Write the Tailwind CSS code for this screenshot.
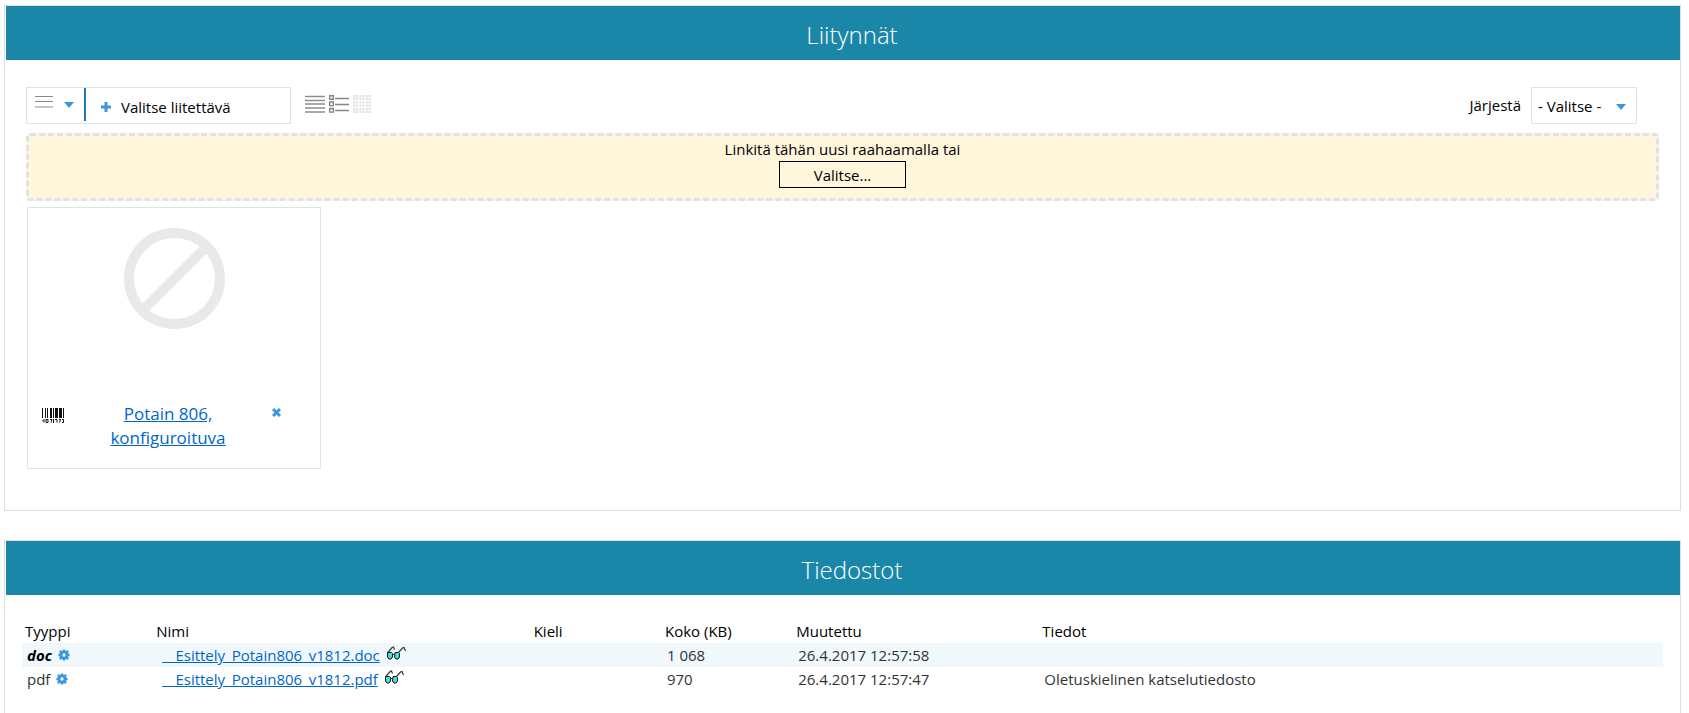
<!DOCTYPE html>
<html lang="fi">
<head>
  <meta charset="utf-8">
  <meta name="viewport" content="width=device-width, initial-scale=1">
  <title>Liitynnät</title>
  <script src="https://cdn.jsdelivr.net/npm/@tailwindcss/browser@4"></script>
</head>
<body class="bg-white text-black text-[15px] leading-6 font-['Segoe_UI','Open_Sans',sans-serif]">
  <!-- shared icons -->
  <svg class="hidden">
    <symbol id="gear" viewBox="0 0 12 12">
      <path fill="none" stroke="#3b97dd" stroke-width="2.4" d="M6 .4v11.200M.4 6h11.200M1.800 1.800l8.400 8.400M10.200 1.800l-8.400 8.400"/>
      <circle cx="6" cy="6" r="3.2" fill="none" stroke="#3b97dd" stroke-width="2.6"/>
      <circle cx="6" cy="6" r="1.7" fill="#f0f8fc"/>
    </symbol>
    <symbol id="glasses" viewBox="0 0 20 14">
      <path fill="#40e0e0" stroke="#111" stroke-width="1" d="M1.500 6.500h4l1 1v3.500l-1.500 2H3l-1.500-2zM9 6.500h3.500l1 1v3.500l-1.500 2h-2L8.500 11z"/>
      <path fill="none" stroke="#333" stroke-width="1.200" d="M1.500 7L6 1.500l1.500-.5 1 2.500M6.500 8.500h2M12.500 6.500L16.500 2l1.500-.5 1.500 3.500"/>
    </symbol>
    <symbol id="caret" viewBox="0 0 10 6">
      <path fill="#3b97dd" d="M0 0h10L5 6z"/>
    </symbol>
  </svg>

  <main class="flex flex-col gap-[29px] pt-[5px] pl-1 pr-2">
    <section class="border border-[#dedede] pb-[41px]">
      <h2 class="ml-px h-[54px] pl-[18px] bg-[#1b87a8] text-white text-2xl leading-[58px] font-light text-center">Liitynnät</h2>
      <div class="pt-[27px] pl-[21px] pr-[21px]">
        <div class="flex items-center mb-[9px]">
          <div class="flex w-[265px] h-[37px] border border-[#dde2ec]">
            <button type="button" aria-label="Toiminnot" class="flex items-center gap-[11px] w-[59px] h-[33px] pl-2 border-r-2 border-[#1f78b4]">
              <svg class="w-[18px] h-3 mb-[6px]" viewBox="0 0 18 12" fill="none" stroke="#8a8a8a"><path d="M0 .5h18M0 5.500h18M0 11h18"/></svg>
              <svg class="w-[10px] h-[6px]"><use href="#caret"/></svg>
            </button>
            <button type="button" class="flex items-center gap-[10px] grow pl-[15px] pt-[2px]">
              <svg class="w-[10px] h-[10px]" viewBox="0 0 10 10" fill="none" stroke="#3b97dd" stroke-width="3"><path d="M5 0v10M0 5h10"/></svg>
              <span>Valitse liitettävä</span>
            </button>
          </div>
          <div class="flex gap-1 ml-[14px] mb-1">
            <button type="button" aria-label="Luettelo">
              <svg class="w-5 h-[18px]" viewBox="0 0 20 18" fill="none" stroke="#8e8e8e" stroke-width="1.500"><path d="M0 1.500h20M0 5.500h20M0 9h20M0 13h20M0 17h20"/></svg>
            </button>
            <button type="button" aria-label="Tiedot">
              <svg class="w-5 h-[18px]" viewBox="0 0 20 18" fill="none" stroke="#858585" stroke-width="1.400"><path d="M.7.7h3.600v3.600H.7zM.7 7h3.600v3.600H.7zM.7 13.500h3.600v3.600H.7zM6 3.500h14M6 9.500h14M6 15.500h14"/></svg>
            </button>
            <button type="button" aria-label="Kuvakkeet">
              <svg class="w-[18px] h-[18px]" viewBox="0 0 18 18" fill="none" stroke="#e6e6e6" stroke-width="1.600"><path d="M.7.7h3.600v3.600H.7zM7.200.7h3.600v3.600H7.200zM13.700.7h3.600v3.600h-3.600zM.7 7.200h3.600v3.600H.7zM7.200 7.200h3.600v3.600H7.200zM13.700 7.200h3.600v3.600h-3.600zM.7 13.700h3.600v3.600H.7zM7.200 13.700h3.600v3.600H7.200zM13.700 13.700h3.600v3.600h-3.600z"/></svg>
            </button>
          </div>
          <div class="flex items-center gap-[10px] ml-auto mr-[22px]">
            <label for="sort" class="pb-[2px]">Järjestä</label>
            <div class="grid items-center">
              <select id="sort" class="col-start-1 row-start-1 appearance-none w-[106px] h-[37px] pl-[6px] border border-[#dde2ec] bg-white">
                <option>- Valitse -</option>
              </select>
              <svg class="col-start-1 row-start-1 justify-self-end mt-[2px] mr-[11px] w-[10px] h-[6px] pointer-events-none"><use href="#caret"/></svg>
            </div>
          </div>
        </div>

        <div class="flex flex-col items-center h-[68px] pt-px mb-[6px] rounded border-3 border-dashed border-[#dde2ec] bg-[#fff6dc]">
          <p>Linkitä tähän uusi raahaamalla tai</p>
          <button type="button" class="w-[127px] h-[27px] border border-black">Valitse...</button>
        </div>

        <article class="flex flex-col w-[294px] h-[262px] ml-px border border-[#dde2ec]">
          <div class="flex justify-center pt-5">
            <svg class="w-[101px] h-[101px]" viewBox="0 0 101 101" fill="none" stroke="#e9e9e9" stroke-width="10"><circle cx="50.500" cy="50.500" r="45.500"/><path d="M18 83L83 18"/></svg>
          </div>
          <div class="flex items-start justify-between pt-[73px] pl-[14px] pr-[39px]">
            <svg class="w-[22px] h-[15px] mt-[6px]" viewBox="0 0 22 15" fill="none" stroke="#111">
              <path d="M.5 0v10M3.500 0v10M5.500 0v10M11.500 0v10M15.500 0v10M19.500 0v10M21.500 0v10"/>
              <path stroke-width="2" d="M9 0v10M14 0v10M18 0v10"/>
              <path d="M0 13.500l2-2v3M4 11.500h2v3H4zM8 11.500h2l-1 3M11.500 11v4M13 11.500h2v3M17 11.500h1.500l-1 3M20 11.500h1.500v3H20"/>
            </svg>
            <a href="#" class="w-[130px] text-[17px] leading-6 text-center text-[#0066cc] underline">Potain 806, konfiguroituva</a>
            <button type="button" aria-label="Poista" class="mt-[6px]">
              <svg class="block w-[9px] h-[9px]" viewBox="0 0 9 9" fill="none" stroke="#3b97dd" stroke-width="3"><path d="M1 1l7 7M8 1L1 8"/></svg>
            </button>
          </div>
        </article>
      </div>
    </section>

    <section class="border border-b-0 border-[#dedede] pb-6">
      <h2 class="ml-px h-[54px] pl-[18px] bg-[#1b87a8] text-white text-2xl leading-[58px] font-light text-center">Tiedostot</h2>
      <div class="pt-[23px] pl-[17px] pr-[17px]">
        <table class="w-full table-fixed text-left">
          <thead>
            <tr class="h-6">
              <th class="w-[8%] pl-[3px] pt-px font-normal">Tyyppi</th>
              <th class="w-[23%] pl-[3px] pt-px font-normal">Nimi</th>
              <th class="w-[8%] pl-[3px] pt-px font-normal">Kieli</th>
              <th class="w-[8%] pl-[3px] pt-px font-normal">Koko (KB)</th>
              <th class="w-[15%] pl-[3px] pt-px font-normal">Muutettu</th>
              <th class="w-[38%] pl-[3px] pt-px font-normal">Tiedot</th>
            </tr>
          </thead>
          <tbody class="text-[#333]">
            <tr class="h-6 bg-[#f0f8fc]">
              <td class="pl-[5px]">
                <div class="flex items-center gap-[6px]">
                  <span class="font-bold italic text-black">doc</span>
                  <button type="button" aria-label="Asetukset"><svg class="block w-3 h-3"><use href="#gear"/></svg></button>
                </div>
              </td>
              <td class="pl-[9px]">
                <div class="flex items-center gap-[6px]">
                  <a href="#" class="text-[#0066cc] underline">__Esittely_Potain806_v1812.doc</a>
                  <svg class="w-5 h-[14px] mb-1"><use href="#glasses"/></svg>
                </div>
              </td>
              <td class="pl-[5px]"></td>
              <td class="pl-[5px]">1 068</td>
              <td class="pl-[5px]">26.4.2017 12:57:58</td>
              <td class="pl-[5px]"></td>
            </tr>
            <tr class="h-6">
              <td class="pl-[5px]">
                <div class="flex items-center gap-[6px]">
                  <span>pdf</span>
                  <button type="button" aria-label="Asetukset"><svg class="block w-3 h-3"><use href="#gear"/></svg></button>
                </div>
              </td>
              <td class="pl-[9px]">
                <div class="flex items-center gap-[6px]">
                  <a href="#" class="text-[#0066cc] underline">__Esittely_Potain806_v1812.pdf</a>
                  <svg class="w-5 h-[14px] mb-1"><use href="#glasses"/></svg>
                </div>
              </td>
              <td class="pl-[5px]"></td>
              <td class="pl-[5px]">970</td>
              <td class="pl-[5px]">26.4.2017 12:57:47</td>
              <td class="pl-[5px]">Oletuskielinen katselutiedosto</td>
            </tr>
          </tbody>
        </table>
      </div>
    </section>
  </main>
</body>
</html>
